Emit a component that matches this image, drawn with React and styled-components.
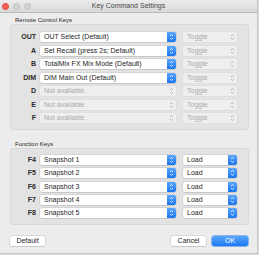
import React from "react";
import styled, { createGlobalStyle } from "styled-components";

const GlobalStyle = createGlobalStyle`
  html, body {
    margin: 0;
    padding: 0;
    background: #dcdcdc;
  }
  body {
    font-family: "Liberation Sans", Arial, sans-serif;
  }
`;

const Window = styled.div`
  width: 258px;
  height: 254px;
  box-sizing: border-box;
  background: #ececec;
  border-right: 1px solid #c4c4c4;
  border-bottom: 1px solid #c4c4c4;
  display: flex;
  flex-direction: column;
  overflow: hidden;
`;

const TitleBar = styled.div`
  height: 13px;
  box-sizing: border-box;
  border-bottom: 1px solid #bdbdbd;
  background: linear-gradient(#ececec, #d8d8d8);
  display: grid;
  grid-template-columns: 1fr auto 1fr;
  align-items: center;
`;

const Lights = styled.div`
  display: flex;
  gap: 4px;
  padding-left: 2px;
`;

const Light = styled.span`
  width: 7px;
  height: 7px;
  border-radius: 50%;
  box-sizing: border-box;
  background: ${(p) => (p.$red ? "#fc5f58" : "#d3d3d3")};
  border: 1px solid ${(p) => (p.$red ? "#e0443e" : "#c2c2c2")};
`;

const Title = styled.div`
  font-size: 7px;
  color: #4a4a4a;
  line-height: 12px;
`;

const Content = styled.div`
  padding: 0 8px 0 10px;
  display: flex;
  flex-direction: column;
`;

const SectionLabel = styled.div`
  font-size: 6px;
  line-height: 8px;
  height: 8px;
  color: #262626;
  padding-left: 5px;
  margin-top: ${(p) => p.$top}px;
`;

const GroupBox = styled.div`
  background: #e3e3e3;
  border: 1px solid #d8d8d8;
  border-radius: 3px;
  padding: ${(p) => p.$pad}px 0 6px;
  display: grid;
  grid-template-columns: 25px 136px 57px;
  column-gap: 4px;
  row-gap: ${(p) => p.$gap}px;
  grid-auto-rows: 10px;
  align-items: center;
`;

const KeyLabel = styled.div`
  font-size: 7px;
  font-weight: bold;
  color: #2b2b2b;
  text-align: right;
  line-height: 10px;
`;

const SelectBox = styled.div`
  height: 10px;
  box-sizing: border-box;
  border-radius: 2px;
  display: flex;
  align-items: stretch;
  background: ${(p) => (p.$disabled ? "#efefef" : "#ffffff")};
  box-shadow: ${(p) =>
    p.$disabled
      ? "0 0 0 0.5px #dcdcdc"
      : "0 0 0 0.5px #c6c6c6, 0 0.5px 0.5px #b0b0b0"};
  margin-left: ${(p) => (p.$second ? "3px" : "0")};
`;

const SelectText = styled.div`
  flex: 1;
  font-size: 7px;
  line-height: 10px;
  padding-left: 4px;
  color: ${(p) => (p.$disabled ? "#a9a9a9" : "#1e1e1e")};
  white-space: nowrap;
  overflow: hidden;
`;

const Stepper = styled.div`
  width: 9px;
  border-radius: 0 2px 2px 0;
  display: flex;
  align-items: center;
  justify-content: center;
  background: ${(p) =>
    p.$disabled ? "transparent" : "linear-gradient(#5aa6fb, #1a76f2)"};
`;

const Chevrons = ({ color }) => (
  <svg width="5" height="8" viewBox="0 0 5 8">
    <polyline points="1,3 2.5,1.5 4,3" fill="none" stroke={color} strokeWidth="0.8" />
    <polyline points="1,5 2.5,6.5 4,5" fill="none" stroke={color} strokeWidth="0.8" />
  </svg>
);

const Select = ({ value, disabled, second }) => (
  <SelectBox $disabled={disabled} $second={second}>
    <SelectText $disabled={disabled}>{value}</SelectText>
    <Stepper $disabled={disabled}>
      <Chevrons color={disabled ? "#a8a8a8" : "#ffffff"} />
    </Stepper>
  </SelectBox>
);

const ButtonRow = styled.div`
  display: flex;
  gap: 6px;
  margin-top: 11px;
  padding-right: 1px;
`;

const Spacer = styled.div`
  flex: 1;
`;

const Button = styled.div`
  width: ${(p) => p.$w}px;
  height: 10px;
  border-radius: 2px;
  font-size: 7px;
  line-height: 10px;
  text-align: center;
  color: ${(p) => (p.$primary ? "#ffffff" : "#1e1e1e")};
  background: ${(p) =>
    p.$primary ? "linear-gradient(#5aa6fb, #1d78f3)" : "#ffffff"};
  box-shadow: ${(p) =>
    p.$primary ? "0 0 0 0.5px #2a7de8" : "0 0 0 0.5px #c6c6c6, 0 0.5px 0.5px #b0b0b0"};
`;

const remoteRows = [
  { key: "OUT", value: "OUT Select (Default)" },
  { key: "A", value: "Set Recall (press 2s; Default)" },
  { key: "B", value: "TotalMix FX Mix Mode (Default)" },
  { key: "DIM", value: "DIM Main Out (Default)" },
  { key: "D", value: "Not available.", disabled: true },
  { key: "E", value: "Not available.", disabled: true },
  { key: "F", value: "Not available.", disabled: true },
];

const functionRows = [
  { key: "F4", value: "Snapshot 1" },
  { key: "F5", value: "Snapshot 2" },
  { key: "F6", value: "Snapshot 3" },
  { key: "F7", value: "Snapshot 4" },
  { key: "F8", value: "Snapshot 5" },
];

export default function App() {
  return (
    <>
      <GlobalStyle />
      <Window>
        <TitleBar>
          <Lights>
            <Light $red />
            <Light />
            <Light />
          </Lights>
          <Title>Key Command Settings</Title>
          <div />
        </TitleBar>
        <Content>
          <SectionLabel $top={3}>Remote Control Keys</SectionLabel>
          <GroupBox $pad={7} $gap={3.5}>
            {remoteRows.map((r) => (
              <React.Fragment key={r.key}>
                <KeyLabel>{r.key}</KeyLabel>
                <Select value={r.value} disabled={r.disabled} />
                <Select value="Toggle" disabled second />
              </React.Fragment>
            ))}
          </GroupBox>
          <SectionLabel $top={10}>Function Keys</SectionLabel>
          <GroupBox $pad={6} $gap={3.25}>
            {functionRows.map((r) => (
              <React.Fragment key={r.key}>
                <KeyLabel>{r.key}</KeyLabel>
                <Select value={r.value} />
                <Select value="Load" second />
              </React.Fragment>
            ))}
          </GroupBox>
          <ButtonRow>
            <Button $w={35}>Default</Button>
            <Spacer />
            <Button $w={35}>Cancel</Button>
            <Button $w={36} $primary>OK</Button>
          </ButtonRow>
        </Content>
      </Window>
    </>
  );
}
